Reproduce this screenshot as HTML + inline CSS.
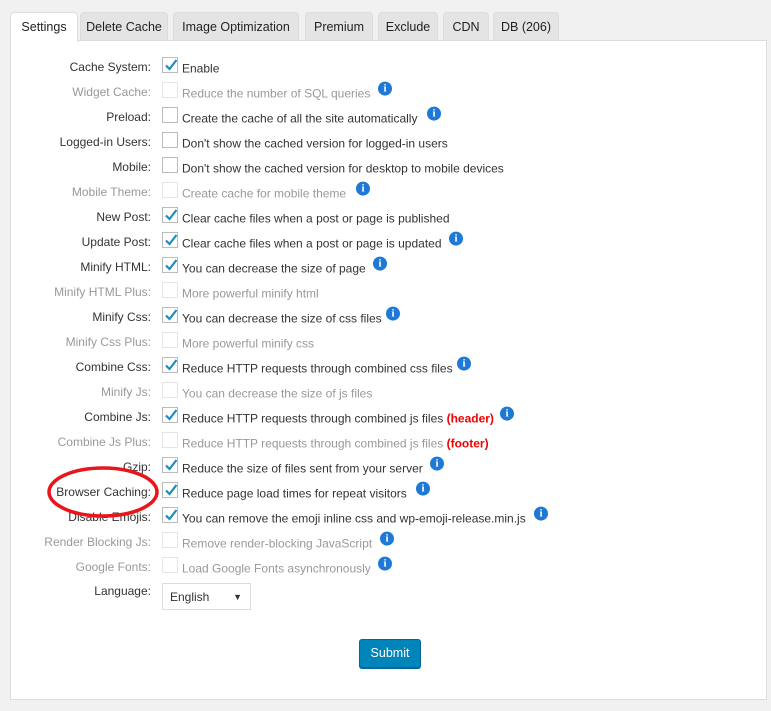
<!DOCTYPE html>
<html><head><style>
body{margin:0;width:771px;height:711px;background:#f1f1f1;font-family:"Liberation Sans",sans-serif;font-size:12px;color:#333;position:relative;overflow:hidden}
.tab{position:absolute;top:12px;height:28px;background:#e4e4e4;border:1px solid #ddd;border-bottom:none;border-radius:4px 4px 0 0;box-sizing:border-box;text-align:center;line-height:28px;color:#222;font-size:12.5px}
.tab.on{background:#fff;height:30px;z-index:2}
.panel{position:absolute;left:10px;top:40px;width:757px;height:660px;background:#fff;border:1px solid #ddd;box-sizing:border-box}
.lab{position:absolute;text-align:right;font-size:12px;transform:translateY(-50%)}
.cb{position:absolute;left:162px;width:16px;height:16px;border:1px solid #bbb;box-sizing:border-box;background:#fff;transform:translateY(-50%)}
.cb.d{border-color:#e6e6e6}
.cb svg{position:absolute;left:1px;top:0}
.tx{position:absolute;left:182px;transform:translateY(-40%);white-space:nowrap}
.dis{color:#999}
.i{position:absolute;width:14px;height:14px;border-radius:50%;background:#1e78d6;color:#fff;font:bold 11px/14px "Liberation Serif",serif;text-align:center;transform:translateY(-60%)}
.red{color:#e00;font-weight:bold}
</style></head><body>
<div class="panel"></div>
<div class="tab on" style="left:10px;width:68px">Settings</div>
<div class="tab" style="left:80px;width:88px">Delete Cache</div>
<div class="tab" style="left:173px;width:126px">Image Optimization</div>
<div class="tab" style="left:305px;width:68px">Premium</div>
<div class="tab" style="left:378px;width:60px">Exclude</div>
<div class="tab" style="left:443px;width:46px">CDN</div>
<div class="tab" style="left:493px;width:66px">DB (206)</div>

<div id="rows"></div>
<script>
var ck='<svg width="14" height="14" viewBox="0 0 14 14"><path d="M2 7.5L5.5 11L12.5 2" fill="none" stroke="#1e8cbe" stroke-width="2.2"/></svg>';
var R=[
["Cache System:",1,0,"Enable",0],
["Widget Cache:",0,1,"Reduce the number of SQL queries",378],
["Preload:",0,0,"Create the cache of all the site automatically",427],
["Logged-in Users:",0,0,"Don't show the cached version for logged-in users",0],
["Mobile:",0,0,"Don't show the cached version for desktop to mobile devices",0],
["Mobile Theme:",0,1,"Create cache for mobile theme",356],
["New Post:",1,0,"Clear cache files when a post or page is published",0],
["Update Post:",1,0,"Clear cache files when a post or page is updated",449],
["Minify HTML:",1,0,"You can decrease the size of page",373],
["Minify HTML Plus:",0,1,"More powerful minify html",0],
["Minify Css:",1,0,"You can decrease the size of css files",386],
["Minify Css Plus:",0,1,"More powerful minify css",0],
["Combine Css:",1,0,"Reduce HTTP requests through combined css files",457],
["Minify Js:",0,1,"You can decrease the size of js files",0],
["Combine Js:",1,0,"Reduce HTTP requests through combined js files <span class=red>(header)</span>",500],
["Combine Js Plus:",0,1,"Reduce HTTP requests through combined js files <span class=red>(footer)</span>",0],
["Gzip:",1,0,"Reduce the size of files sent from your server",430],
["Browser Caching:",1,0,"Reduce page load times for repeat visitors",416],
["Disable Emojis:",1,0,"You can remove the emoji inline css and wp-emoji-release.min.js",534],
["Render Blocking Js:",0,1,"Remove render-blocking JavaScript",380],
["Google Fonts:",0,1,"Load Google Fonts asynchronously",378]];
var h='';
R.forEach(function(r,k){var y=67+k*25;
h+='<div class="lab'+(r[2]?' dis':'')+'" style="top:'+y+'px;left:0;width:151px">'+r[0]+'</div>';
h+='<div class="cb'+(r[2]?' d':'')+'" style="top:'+(y-2)+'px">'+(r[1]?ck:'')+'</div>';
h+='<div class="tx'+(r[2]?' dis':'')+'" style="top:'+y+'px">'+r[3]+'</div>';
if(r[4])h+='<div class="i" style="left:'+r[4]+'px;top:'+(y-2)+'px">i</div>';});
document.getElementById('rows').innerHTML=h;
</script>
<div class="lab" style="top:591px;left:0;width:151px">Language:</div>
<div style="position:absolute;left:162px;top:583px;width:89px;height:27px;border:1px solid #ddd;box-sizing:border-box;line-height:27px;padding-left:7px;font-size:12px">English<span style="position:absolute;right:8px;font-size:9px">▼</span></div>
<div style="position:absolute;left:359px;top:639px;width:62px;height:29px;background:#0085ba;border:1px solid #006799;border-radius:3px;box-sizing:border-box;color:#fff;text-align:center;line-height:27px;font-size:12.5px;box-shadow:0 1px 0 #006799">Submit</div>
<svg style="position:absolute;left:0;top:0" width="771" height="711"><ellipse cx="103" cy="492" rx="54" ry="24" fill="none" stroke="#e8151b" stroke-width="3.5"/></svg>
</body></html>
